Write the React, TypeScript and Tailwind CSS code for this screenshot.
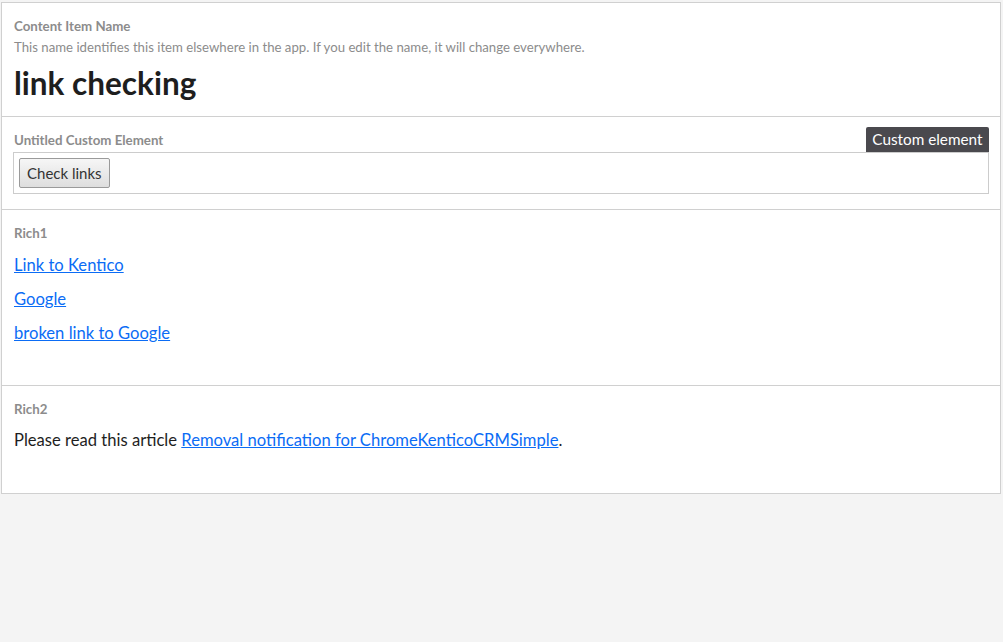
const font = { fontFamily: "Lato, 'Noto Sans', sans-serif" };

const Label = ({ children }: { children: React.ReactNode }) => (
  <div className="text-[13.3px] font-bold leading-[16px] text-[#8c8c8c]">{children}</div>
);

export default function App() {
  const links = ["Link to Kentico", "Google", "broken link to Google"];
  return (
    <div className="min-h-screen bg-[#f4f4f4] pt-[2px] pl-[1px]" style={font}>
      <div className="w-[1000px] border border-[#d0d0d0] bg-white">
        {/* Name */}
        <div className="border-b border-[#d0d0d0] px-[12px] pt-[15px] pb-[13px]">
          <Label>Content Item Name</Label>
          <div className="mt-[5px] text-[13.2px] leading-[16px] text-[#8c8c8c]">
            This name identifies this item elsewhere in the app. If you edit the name, it will change everywhere.
          </div>
          <h1 className="mt-[8px] text-[31.5px] font-bold leading-[40px] text-[#1e1e1e]">link checking</h1>
        </div>

        {/* Custom element */}
        <div className="border-b border-[#d0d0d0] px-[11px] pt-[10px] pb-[15px]">
          <div className="flex items-end justify-between">
            <div className="pb-[4px] pl-[1px]">
              <Label>Untitled Custom Element</Label>
            </div>
            <span className="rounded-t-[2px] bg-[#4a494e] px-[6.5px] text-[15.3px] leading-[25px] text-white">
              Custom element
            </span>
          </div>
          <div className="border border-[#cccccc] p-[5px]">
            <button className="h-[30px] rounded-[2px] border border-[#9a9a9a] bg-gradient-to-b from-[#f6f6f6] to-[#dedede] px-[7px] text-[15px] text-[#333]">
              Check links
            </button>
          </div>
        </div>

        {/* Rich1 */}
        <div className="border-b border-[#d0d0d0] px-[12px] pt-[15px] pb-[40px]">
          <Label>Rich1</Label>
          <div className="mt-[12px] flex flex-col items-start gap-[10px]">
            {links.map(l => (
              <a key={l} href="#" className="text-[16.6px] leading-[24px] text-[#0b6cf5] underline">
                {l}
              </a>
            ))}
          </div>
        </div>

        {/* Rich2 */}
        <div className="px-[12px] pt-[15px] pb-[41px]">
          <Label>Rich2</Label>
          <p className="mt-[11px] text-[16.6px] leading-[24px] text-[#1e1e1e]">
            Please read this article{" "}
            <a href="#" className="text-[#0b6cf5] underline">Removal notification for ChromeKenticoCRMSimple</a>.
          </p>
        </div>
      </div>
    </div>
  );
}
